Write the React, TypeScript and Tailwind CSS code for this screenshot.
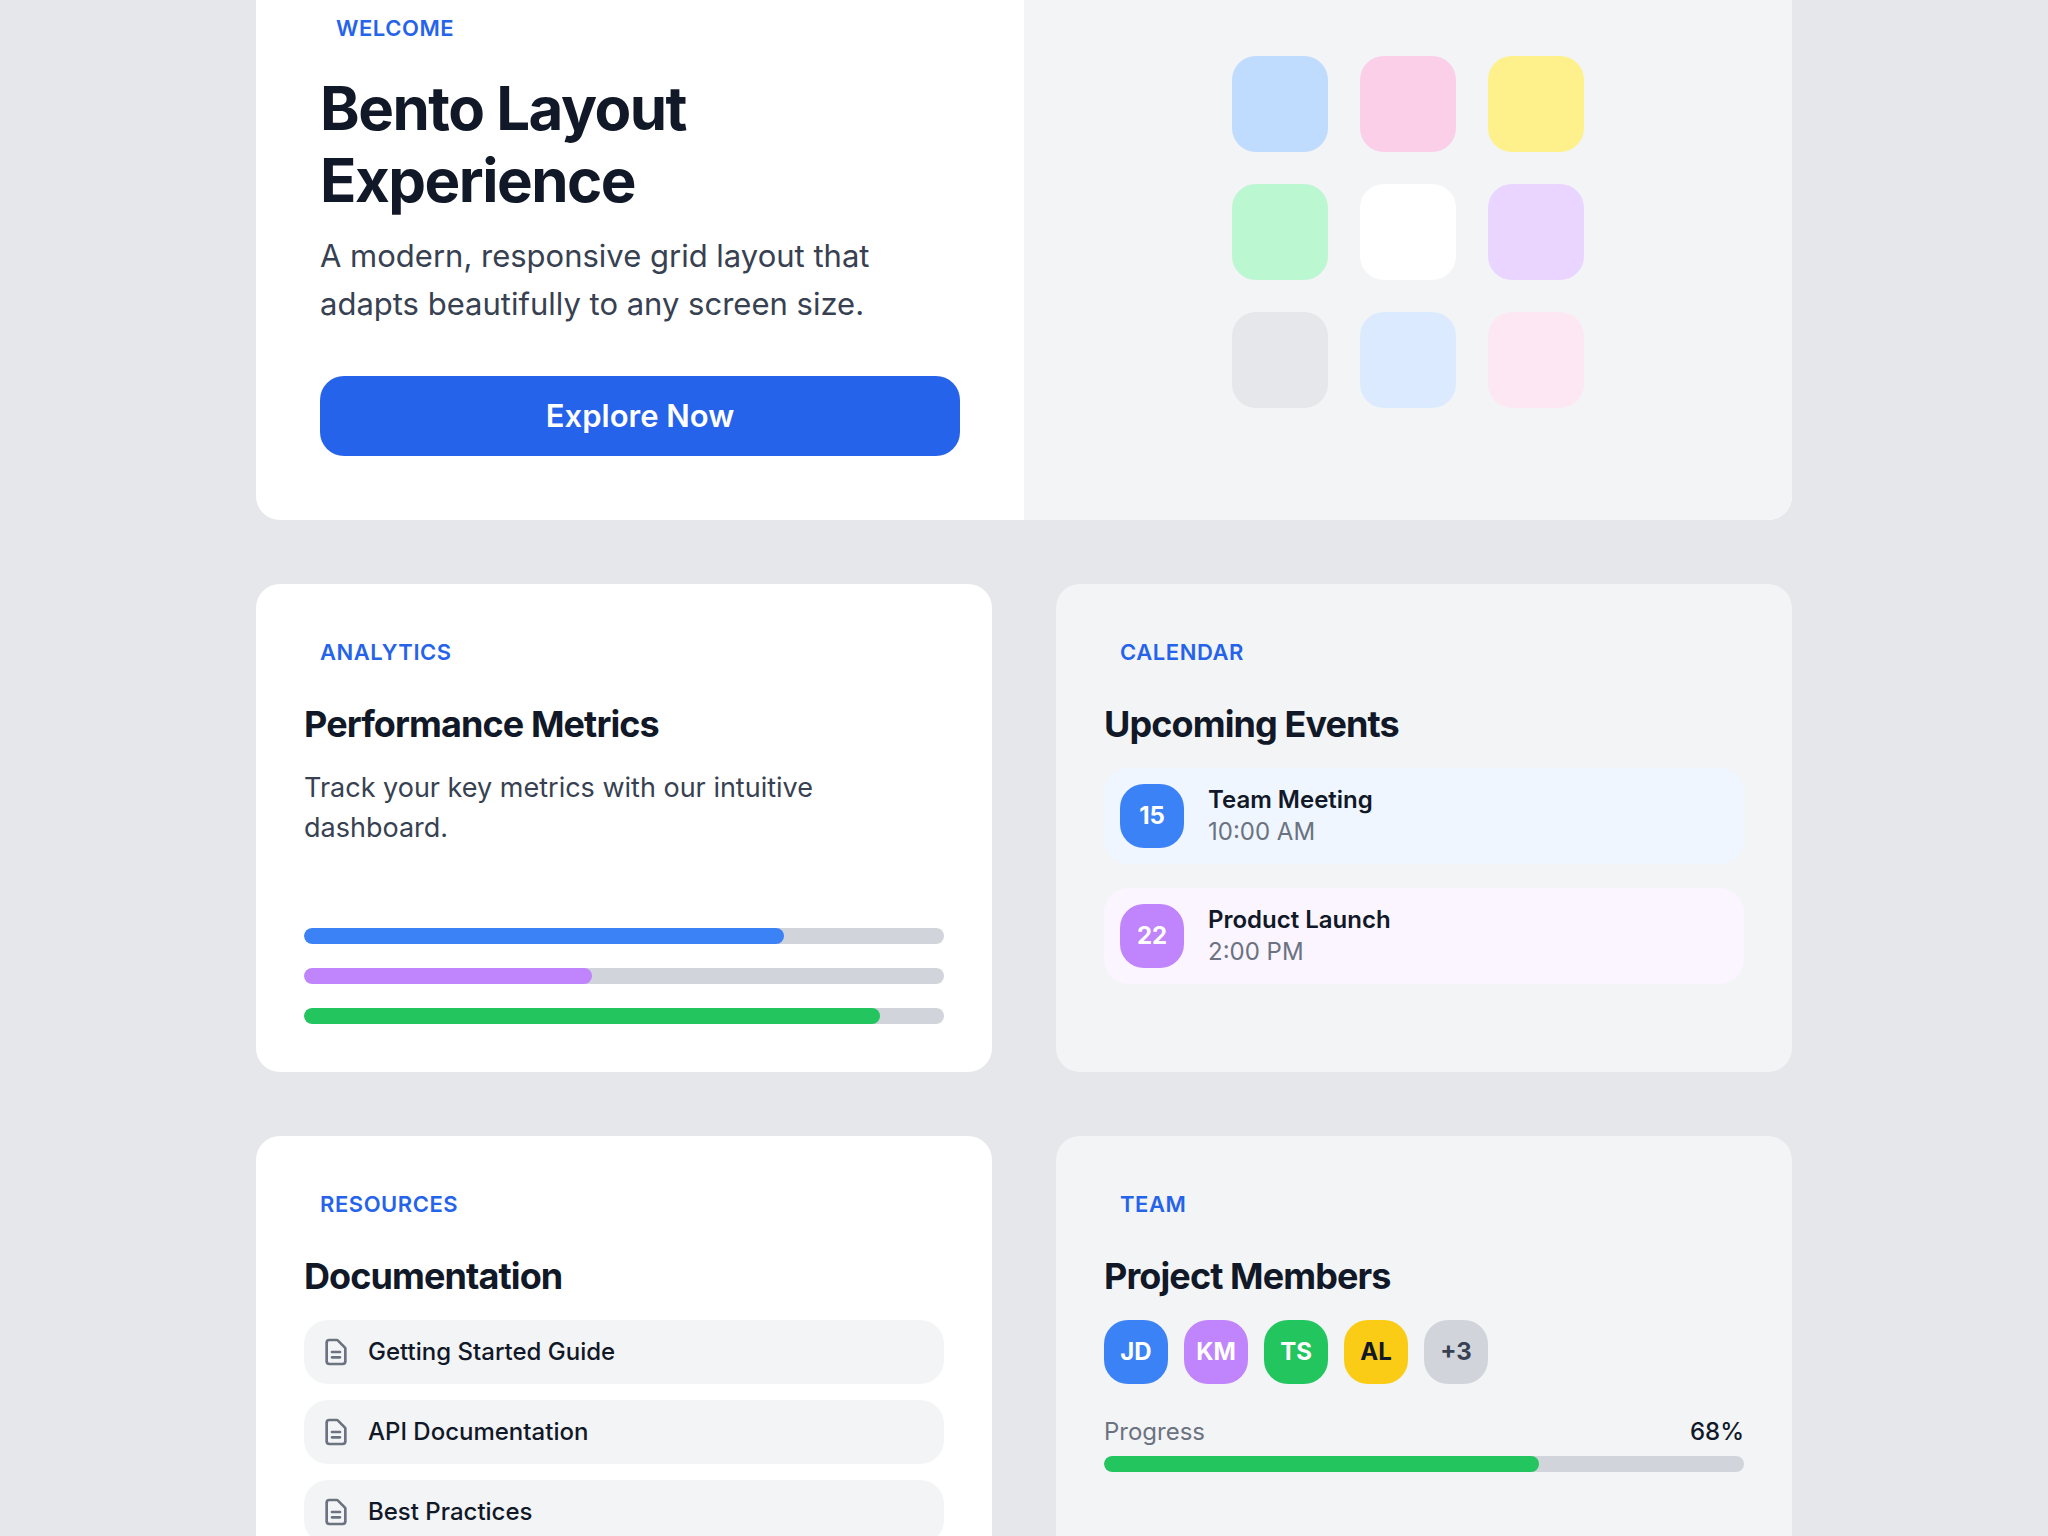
import type { ReactNode } from "react";

const swatches = [
  "bg-[#bfdbfe]",
  "bg-[#fbcfe8]",
  "bg-[#fef08a]",
  "bg-[#bbf7d0]",
  "bg-white",
  "bg-[#e9d5ff]",
  "bg-[#e5e7eb]",
  "bg-[#dbeafe]",
  "bg-[#fce7f3]",
];

const metrics = [
  { label: "Visits", value: 75, color: "bg-[#3b82f6]" },
  { label: "Signups", value: 45, color: "bg-[#c084fc]" },
  { label: "Retention", value: 90, color: "bg-[#22c55e]" },
];

const events = [
  {
    day: "15",
    title: "Team Meeting",
    time: "10:00 AM",
    row: "bg-[#eff6ff]",
    badge: "bg-[#3b82f6]",
  },
  {
    day: "22",
    title: "Product Launch",
    time: "2:00 PM",
    row: "bg-[#faf5ff]",
    badge: "bg-[#c084fc]",
  },
];

const docs = ["Getting Started Guide", "API Documentation", "Best Practices"];

const members = [
  { initials: "JD", color: "bg-[#3b82f6] text-white" },
  { initials: "KM", color: "bg-[#c084fc] text-white" },
  { initials: "TS", color: "bg-[#22c55e] text-white" },
  { initials: "AL", color: "bg-[#facc15] text-[#111827]" },
  { initials: "+3", color: "bg-[#d1d5db] text-[#374151]" },
];

function Tag({ children }: { children: ReactNode }) {
  return (
    <span className="mb-6 self-start px-4 py-1 text-[22px] leading-8 font-semibold tracking-wide text-[#2563eb] uppercase">
      {children}
    </span>
  );
}

function Card({
  tag,
  title,
  className,
  children,
}: {
  tag: string;
  title: string;
  className: string;
  children: ReactNode;
}) {
  return (
    <section className={`flex flex-col rounded-3xl p-12 ${className}`}>
      <Tag>{tag}</Tag>
      <h2 className="mb-4 text-4xl leading-14 font-bold tracking-tight">
        {title}
      </h2>
      {children}
    </section>
  );
}

function ProgressBar({
  label,
  value,
  color,
}: {
  label: string;
  value: number;
  color: string;
}) {
  return (
    <div
      role="progressbar"
      aria-label={label}
      aria-valuenow={value}
      aria-valuemin={0}
      aria-valuemax={100}
      className="h-4 overflow-hidden rounded-full bg-[#d1d5db]"
    >
      <div
        className={`h-full rounded-full ${color}`}
        style={{ width: `${value}%` }}
      />
    </div>
  );
}

function DocumentIcon() {
  return (
    <svg
      aria-hidden="true"
      viewBox="0 0 24 24"
      fill="none"
      stroke="currentColor"
      strokeWidth="2"
      strokeLinecap="round"
      strokeLinejoin="round"
      className="size-8 shrink-0 text-[#6b7280]"
    >
      <path d="M9 12h6m-6 4h6m2 5H7a2 2 0 01-2-2V5a2 2 0 012-2h5.586a1 1 0 01.707.293l5.414 5.414a1 1 0 01.293.707V19a2 2 0 01-2 2z" />
    </svg>
  );
}

export default function App() {
  return (
    <main className="min-h-screen bg-[#e5e7eb] pb-16 font-['Inter',sans-serif] text-[#111827]">
      <div className="mx-auto grid max-w-screen-2xl grid-cols-2 gap-16">
        <section className="col-span-2 grid grid-cols-2 overflow-hidden rounded-b-3xl bg-white">
          <div className="flex flex-col px-16 pt-2 pb-16">
            <Tag>Welcome</Tag>
            <h1 className="mb-4 text-6xl leading-18 font-bold tracking-tight">
              Bento Layout
              <br />
              Experience
            </h1>
            <p className="mb-12 text-[31px] leading-12 text-[#374151]">
              A modern, responsive grid layout that adapts beautifully to any
              screen size.
            </p>
            <button
              type="button"
              className="h-20 rounded-3xl bg-[#2563eb] text-[31px] leading-12 font-semibold text-white"
            >
              Explore Now
            </button>
          </div>
          <div className="flex items-start justify-center bg-[#f3f4f6] pt-14">
            <div className="grid grid-cols-3 gap-8">
              {swatches.map((color) => (
                <div key={color} className={`size-24 rounded-3xl ${color}`} />
              ))}
            </div>
          </div>
        </section>

        <Card tag="Analytics" title="Performance Metrics" className="bg-white">
          <p className="text-[27px] leading-10 text-[#374151]">
            Track your key metrics with our intuitive dashboard.
          </p>
          <div className="mt-20 space-y-6">
            {metrics.map((metric) => (
              <ProgressBar key={metric.label} {...metric} />
            ))}
          </div>
        </Card>

        <Card tag="Calendar" title="Upcoming Events" className="bg-[#f3f4f6]">
          <ul className="space-y-6">
            {events.map((event) => (
              <li
                key={event.title}
                className={`flex items-center gap-6 rounded-3xl p-4 ${event.row}`}
              >
                <span
                  className={`flex size-16 items-center justify-center rounded-3xl text-2xl font-bold text-white ${event.badge}`}
                >
                  {event.day}
                </span>
                <div className="text-2xl">
                  <p className="font-semibold">{event.title}</p>
                  <p className="text-[#6b7280]">{event.time}</p>
                </div>
              </li>
            ))}
          </ul>
        </Card>

        <Card tag="Resources" title="Documentation" className="bg-white">
          <ul className="space-y-4">
            {docs.map((doc) => (
              <li key={doc}>
                <a
                  href="#"
                  className="flex items-center gap-4 rounded-3xl bg-[#f3f4f6] p-4 text-2xl font-medium"
                >
                  <DocumentIcon />
                  {doc}
                </a>
              </li>
            ))}
          </ul>
        </Card>

        <Card tag="Team" title="Project Members" className="bg-[#f3f4f6]">
          <div className="mb-8 flex gap-4">
            {members.map((member) => (
              <span
                key={member.initials}
                className={`flex size-16 items-center justify-center rounded-3xl text-2xl font-bold ${member.color}`}
              >
                {member.initials}
              </span>
            ))}
          </div>
          <div className="mb-2 flex justify-between text-2xl">
            <span className="text-[#6b7280]">Progress</span>
            <span className="font-medium">68%</span>
          </div>
          <ProgressBar label="Progress" value={68} color="bg-[#22c55e]" />
        </Card>
      </div>
    </main>
  );
}
